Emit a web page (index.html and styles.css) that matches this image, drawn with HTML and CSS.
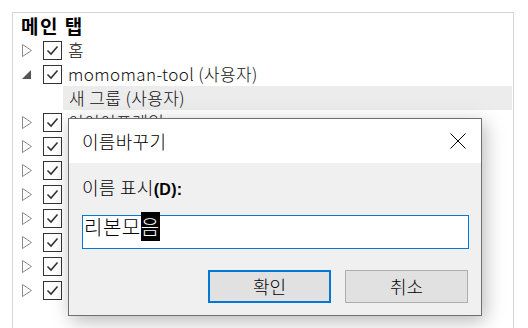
FILE: index.html
```html
<!DOCTYPE html>
<html>
  <head>
    <meta charset="utf-8" />
    <title>이름바꾸기</title>
    <link rel="stylesheet" href="styles.css">
  </head>
  <body>
    <div class="tree">
      <div class="tree-head">메인 탭</div>
      <ul class="nodes">
        <li class="node">
          <svg class="twisty" width="10" height="13" viewBox="0 0 10 13"><polygon points="0.5,0.5 0.5,12.5 9.5,6.5" /></svg>
          <svg class="check" width="19" height="19" viewBox="0 0 19 19"><rect x="0.5" y="0.5" width="18" height="18" /><polyline points="4.5,9.5 8,13 14.5,5.5" /></svg>
          <span class="label">홈</span>
        </li>
        <li class="node">
          <svg class="twisty open" width="10" height="13" viewBox="0 0 10 13"><polygon points="9,2 9,11 0,11" /></svg>
          <svg class="check" width="19" height="19" viewBox="0 0 19 19"><rect x="0.5" y="0.5" width="18" height="18" /><polyline points="4.5,9.5 8,13 14.5,5.5" /></svg>
          <span class="label">momoman-tool (사용자)</span>
        </li>
        <li class="node child">
          <span class="label">새 그룹 (사용자)</span>
        </li>
        <li class="node">
          <svg class="twisty" width="10" height="13" viewBox="0 0 10 13"><polygon points="0.5,0.5 0.5,12.5 9.5,6.5" /></svg>
          <svg class="check" width="19" height="19" viewBox="0 0 19 19"><rect x="0.5" y="0.5" width="18" height="18" /><polyline points="4.5,9.5 8,13 14.5,5.5" /></svg>
          <span class="label">이이이프레임</span>
        </li>
        <li class="node">
          <svg class="twisty" width="10" height="13" viewBox="0 0 10 13"><polygon points="0.5,0.5 0.5,12.5 9.5,6.5" /></svg>
          <svg class="check" width="19" height="19" viewBox="0 0 19 19"><rect x="0.5" y="0.5" width="18" height="18" /><polyline points="4.5,9.5 8,13 14.5,5.5" /></svg>
        </li>
        <li class="node">
          <svg class="twisty" width="10" height="13" viewBox="0 0 10 13"><polygon points="0.5,0.5 0.5,12.5 9.5,6.5" /></svg>
          <svg class="check" width="19" height="19" viewBox="0 0 19 19"><rect x="0.5" y="0.5" width="18" height="18" /><polyline points="4.5,9.5 8,13 14.5,5.5" /></svg>
        </li>
        <li class="node">
          <svg class="twisty" width="10" height="13" viewBox="0 0 10 13"><polygon points="0.5,0.5 0.5,12.5 9.5,6.5" /></svg>
          <svg class="check" width="19" height="19" viewBox="0 0 19 19"><rect x="0.5" y="0.5" width="18" height="18" /><polyline points="4.5,9.5 8,13 14.5,5.5" /></svg>
        </li>
        <li class="node">
          <svg class="twisty" width="10" height="13" viewBox="0 0 10 13"><polygon points="0.5,0.5 0.5,12.5 9.5,6.5" /></svg>
          <svg class="check" width="19" height="19" viewBox="0 0 19 19"><rect x="0.5" y="0.5" width="18" height="18" /><polyline points="4.5,9.5 8,13 14.5,5.5" /></svg>
        </li>
        <li class="node">
          <svg class="twisty" width="10" height="13" viewBox="0 0 10 13"><polygon points="0.5,0.5 0.5,12.5 9.5,6.5" /></svg>
          <svg class="check" width="19" height="19" viewBox="0 0 19 19"><rect x="0.5" y="0.5" width="18" height="18" /><polyline points="4.5,9.5 8,13 14.5,5.5" /></svg>
        </li>
        <li class="node">
          <svg class="twisty" width="10" height="13" viewBox="0 0 10 13"><polygon points="0.5,0.5 0.5,12.5 9.5,6.5" /></svg>
          <svg class="check" width="19" height="19" viewBox="0 0 19 19"><rect x="0.5" y="0.5" width="18" height="18" /><polyline points="4.5,9.5 8,13 14.5,5.5" /></svg>
        </li>
        <li class="node">
          <svg class="twisty" width="10" height="13" viewBox="0 0 10 13"><polygon points="0.5,0.5 0.5,12.5 9.5,6.5" /></svg>
          <svg class="check" width="19" height="19" viewBox="0 0 19 19"><rect x="0.5" y="0.5" width="18" height="18" /><polyline points="4.5,9.5 8,13 14.5,5.5" /></svg>
        </li>
      </ul>
    </div>

    <div class="dialog">
      <div class="dialog-title">
        <span class="title-text">이름바꾸기</span>
        <svg class="close" width="16" height="16" viewBox="0 0 16 16"><path d="M0.5,0.5 L15.5,15.5 M15.5,0.5 L0.5,15.5" /></svg>
      </div>
      <div class="dialog-body">
        <div class="field-label">이름 표시<b>(D):</b></div>
        <div class="field">리본모<span class="sel">음</span></div>
        <div class="buttons">
          <div class="btn default">확인</div>
          <div class="btn">취소</div>
        </div>
      </div>
    </div>
  </body>
</html>
```

FILE: styles.css
```css
* {
  box-sizing: border-box;
  margin: 0;
  padding: 0;
}

body {
  background: #fff;
  font-family: "Noto Sans CJK KR", "Noto Sans", sans-serif;
  font-weight: 300;
  color: #000;
  overflow: hidden;
  height: 328px;
}

/* tree panel behind the dialog */
.tree {
  margin: 12px 0 0 12px;
  width: 502px;
  height: 316px;
  border: 1px solid #d5d5d5;
  border-bottom: none;
  padding: 1px;
  overflow: hidden;
}

.tree-head {
  height: 24px;
  line-height: 24px;
  padding-left: 7px;
  font-size: 19px;
  font-weight: bold;
  letter-spacing: 1.5px;
}

.nodes {
  list-style: none;
}

.node {
  display: flex;
  align-items: center;
  height: 24px;
  padding-left: 7px;
  font-size: 17px;
  color: #111;
}

.twisty {
  fill: none;
  stroke: #8a8a8a;
  margin-left: 1px;
}

.twisty.open {
  fill: #555;
  stroke: none;
}

.check {
  margin-left: 11px;
  fill: #fff;
  stroke: #333;
}

.check polyline {
  fill: none;
  stroke: #333;
  stroke-width: 1.6;
}

.label {
  margin-left: 6px;
  line-height: 24px;
  white-space: nowrap;
  letter-spacing: 0.4px;
}

.node.child {
  padding-left: 49px;
}

.node.child .label {
  margin-left: 0;
  padding-left: 6px;
  flex: 1;
  background: #ececec;
}

/* rename dialog */
.dialog {
  position: absolute;
  left: 68px;
  top: 118px;
  width: 414px;
  height: 198px;
  border: 1px solid #6f6f6f;
  background: #f0f0f0;
  box-shadow: 3px 5px 18px rgba(0, 0, 0, 0.28);
}

.dialog-title {
  display: flex;
  align-items: center;
  justify-content: space-between;
  height: 44px;
  background: #fff;
  padding: 0 15px 0 13px;
}

.title-text {
  font-size: 18px;
  letter-spacing: 0.3px;
}

.close {
  stroke: #000;
  stroke-width: 1;
}

.dialog-body {
  padding: 12px 12px 0 13px;
}

.field-label {
  font-size: 18px;
  line-height: 24px;
  letter-spacing: 0.3px;
}

.field-label b {
  font-family: "Liberation Sans", sans-serif;
  font-size: 16px;
  font-weight: bold;
}

.field {
  margin-top: 13px;
  height: 34px;
  border: 1px solid #0078d7;
  background: #fff;
  font-size: 20px;
  line-height: 22px;
  padding: 0 1px;
  letter-spacing: 0.5px;
}

.sel {
  background: #000;
  color: #fff;
}

.buttons {
  display: flex;
  justify-content: flex-end;
  gap: 14px;
  margin-top: 21px;
  padding-right: 1px;
}

.btn {
  width: 123px;
  height: 33px;
  border: 1px solid #adadad;
  background: #e1e1e1;
  font-size: 18px;
  line-height: 31px;
  text-align: center;
}

.btn.default {
  border: 2px solid #0078d7;
  line-height: 29px;
}
```
